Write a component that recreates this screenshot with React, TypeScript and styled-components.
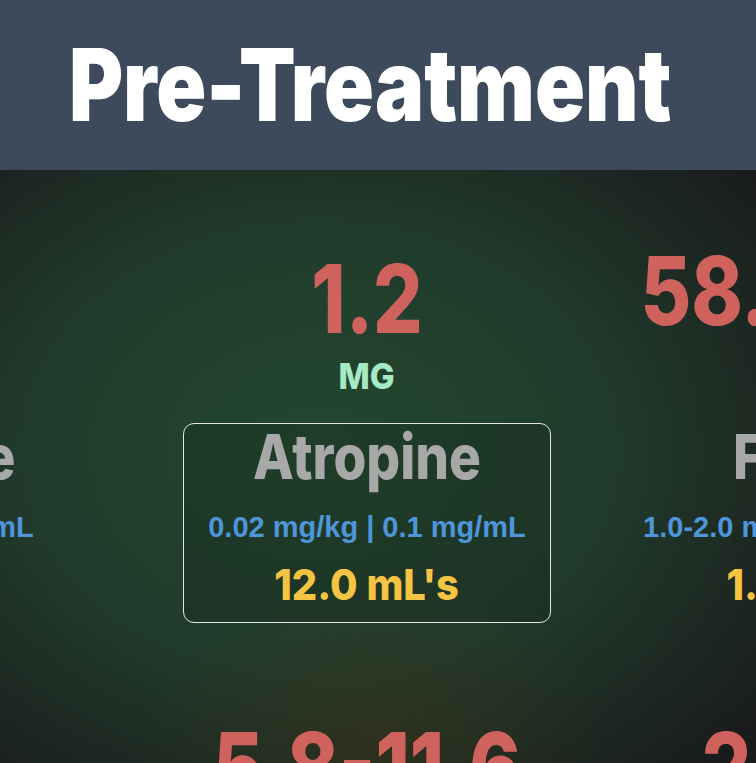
import React from 'react'
import styled, { createGlobalStyle } from 'styled-components'

const GlobalStyle = createGlobalStyle`
    html, body {
        margin: 0;
        padding: 0;
        background: #1a1c1c;
        overflow: hidden;
    }
    body {
        font-family: 'Liberation Sans', Arial, sans-serif;
    }
`

const heavy = `'Inter', 'Liberation Sans', Arial, sans-serif`

const Page = styled.div`
    width: 756px;
    height: 763px;
    display: flex;
    flex-direction: column;
    overflow: hidden;
`

const Header = styled.header`
    height: 170px;
    flex-shrink: 0;
    background: #3d4a5b;
    display: flex;
    align-items: center;
    justify-content: center;
    padding-right: 16px;
`

const Title = styled.h1`
    margin: 0;
    font-family: ${heavy};
    font-size: 100px;
    line-height: 1;
    font-weight: 900;
    color: #ffffff;
    white-space: nowrap;
    transform: scaleX(0.825);
`

const Board = styled.main`
    flex: 1;
    overflow: hidden;
    padding: 81px 22px 0 0;
    background:
        radial-gradient(ellipse 230px 160px at 375px 570px, rgba(66, 50, 18, 0.45), rgba(66, 50, 18, 0) 100%),
        radial-gradient(ellipse 560px 430px at 320px 280px, #23472f 0%, rgba(34, 68, 48, 0.8) 50%, rgba(30, 50, 40, 0) 100%),
        #1a1c1c;
`

const Grid = styled.div`
    display: grid;
    grid-template-columns: repeat(3, 480px);
    justify-content: center;
    row-gap: 96px;
`

const Cell = styled.section`
    display: flex;
    flex-direction: column;
    align-items: center;
`

const Value = styled.div<{ $lift?: number }>`
    font-family: ${heavy};
    font-size: 95px;
    line-height: 95px;
    height: 95px;
    font-weight: 800;
    color: #d0625d;
    white-space: nowrap;
    transform: scaleX(0.82);
    margin-top: ${(p) => -(p.$lift || 0)}px;
    margin-bottom: ${(p) => p.$lift || 0}px;
`

const Unit = styled.div`
    font-family: ${heavy};
    margin-top: 12px;
    height: 36px;
    font-size: 36px;
    line-height: 36px;
    font-weight: 800;
    color: #a6e9c5;
    white-space: nowrap;
    transform: scaleX(0.92);
`

const Card = styled.div<{ $selected?: boolean }>`
    margin-top: 29px;
    width: 368px;
    box-sizing: border-box;
    display: flex;
    flex-direction: column;
    align-items: center;
    padding: 2px 0 16px;
    border: 1px solid ${(p) => (p.$selected ? '#e4e6e4' : 'transparent')};
    border-radius: 11px;
    background: ${(p) => (p.$selected ? 'rgba(10, 14, 12, 0.16)' : 'transparent')};
`

const Name = styled.div`
    font-family: ${heavy};
    font-size: 62px;
    line-height: 62px;
    font-weight: 800;
    color: #a8a8a8;
    white-space: nowrap;
    transform: scaleX(0.857);
`

const Dose = styled.div`
    margin-top: 25px;
    font-size: 29px;
    line-height: 29px;
    font-weight: 700;
    color: #4f95da;
    white-space: nowrap;
`

const Volume = styled.div`
    font-family: ${heavy};
    margin-top: 21px;
    font-size: 43px;
    line-height: 43px;
    font-weight: 800;
    color: #f6c443;
    white-space: nowrap;
    transform: scaleX(0.927);
`

interface Drug {
    value: string
    unit: string
    name: string
    dose: string
    volume: string
    lift?: number
    selected?: boolean
}

const drugs: Drug[] = [
    { value: '87.0', unit: 'MG', name: 'Lidocaine', dose: '1.5 mg/kg | 20 mg/mL', volume: "4.4 mL's" },
    { value: '1.2', unit: 'MG', name: 'Atropine', dose: '0.02 mg/kg | 0.1 mg/mL', volume: "12.0 mL's", selected: true },
    { value: '58.0-116.0', unit: 'MCG', name: 'Fentanyl', dose: '1.0-2.0 mcg/kg | 100 mcg/2mL', volume: "1.2-2.3 mL's", lift: 8 },
    { value: '0.6', unit: 'MG', name: 'Glycopyrrolate', dose: '0.01 mg/kg | 0.2 mg/mL', volume: "2.9 mL's" },
    { value: '5.8-11.6', unit: 'MG', name: 'Vecuronium', dose: '0.1-0.2 mg/kg | 1 mg/mL', volume: "5.8 mL's" },
    { value: '2.9-5.8', unit: 'MG', name: 'Midazolam', dose: '0.05-0.1 mg/kg | 1 mg/mL', volume: "2.9 mL's" },
]

const App = () => {
    return (
        <Page>
            <GlobalStyle />
            <Header>
                <Title>Pre-Treatment</Title>
            </Header>
            <Board>
                <Grid>
                    {drugs.map((drug) => (
                        <Cell key={drug.name}>
                            <Value $lift={drug.lift}>{drug.value}</Value>
                            <Unit>{drug.unit}</Unit>
                            <Card $selected={drug.selected}>
                                <Name>{drug.name}</Name>
                                <Dose>{drug.dose}</Dose>
                                <Volume>{drug.volume}</Volume>
                            </Card>
                        </Cell>
                    ))}
                </Grid>
            </Board>
        </Page>
    )
}

export default App
